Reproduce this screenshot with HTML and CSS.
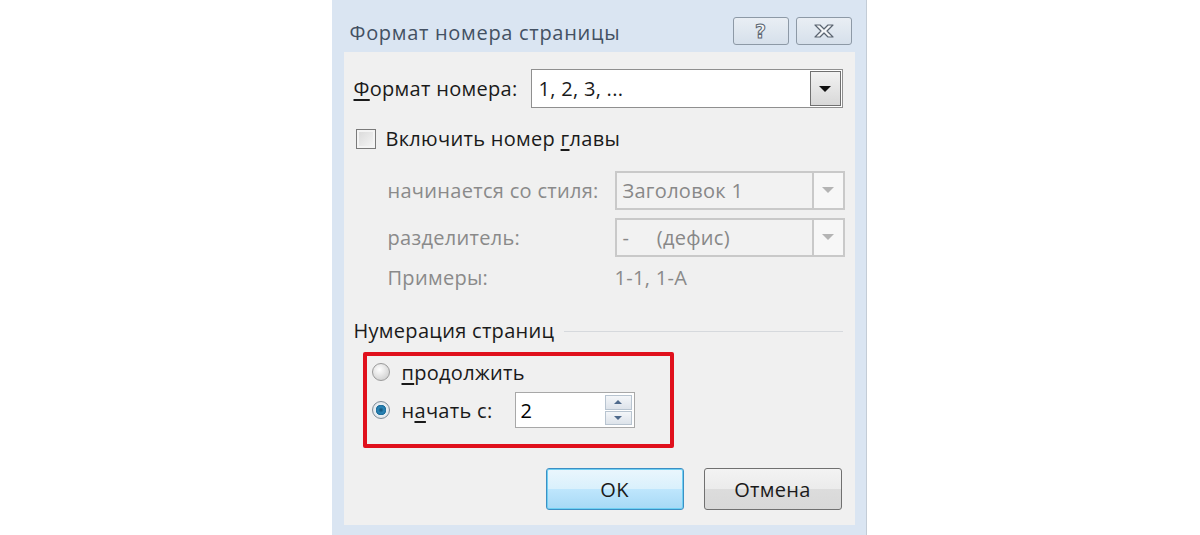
FILE: index.html
```html
<!DOCTYPE html>
<html lang="ru">
<head>
    <meta charset="UTF-8">
    <title>Формат номера страницы</title>
    <link rel="stylesheet" href="styles.css">
</head>
<body>
    <div class="dialog">
        <div class="titlebar">
            <span class="title">Формат номера страницы</span>
            <div class="title-buttons">
                <div class="tb-button"><span class="help-glyph">?</span></div>
                <div class="tb-button">
                    <svg width="26" height="16" viewBox="0 0 26 16">
                        <path d="M4 2 H9 L13 6 L17 2 H22 L16 8 L22 14 H17 L13 10 L9 14 H4 L10 8 Z" fill="#f4f6f8" stroke="#5a6470" stroke-width="1.2" stroke-linejoin="round"/>
                    </svg>
                </div>
            </div>
        </div>

        <div class="panel">
            <div class="row format-row">
                <label class="label-main"><u>Ф</u>ормат номера:</label>
                <div class="select select-wide">
                    <span class="select-text">1, 2, 3, ...</span>
                    <span class="select-arrow"><span class="arrow"></span></span>
                </div>
            </div>

            <div class="row check-row">
                <span class="checkbox"></span>
                <span class="label-main">Включить номер <u>г</u>лавы</span>
            </div>

            <div class="sub-grid">
                <span class="label-off">начинается со стиля:</span>
                <div class="select select-off">
                    <span class="select-text">Заголовок 1</span>
                    <span class="select-arrow"><span class="arrow"></span></span>
                </div>
                <span class="label-off">разделитель:</span>
                <div class="select select-off">
                    <span class="select-text">-&nbsp;&nbsp;&nbsp;&nbsp;&nbsp;(дефис)</span>
                    <span class="select-arrow"><span class="arrow"></span></span>
                </div>
                <span class="label-off">Примеры:</span>
                <span class="label-off">1-1, 1-A</span>
            </div>

            <div class="group-title">
                <span>Нумерация страниц</span>
                <span class="group-line"></span>
            </div>

            <div class="highlight">
                <div class="radio-row">
                    <span class="radio"></span>
                    <span class="label-main"><u>п</u>родолжить</span>
                </div>
                <div class="radio-row">
                    <span class="radio radio-on"></span>
                    <span class="label-main start-label">н<u>а</u>чать с:</span>
                    <div class="spin">
                        <span class="spin-text">2</span>
                        <span class="spin-buttons">
                            <span class="spin-btn"><span class="arrow-up"></span></span>
                            <span class="spin-btn"><span class="arrow-down"></span></span>
                        </span>
                    </div>
                </div>
            </div>

            <div class="buttons">
                <button class="btn btn-default">OK</button>
                <button class="btn">Отмена</button>
            </div>
        </div>
    </div>
</body>
</html>
```

FILE: styles.css
```css
body {
    margin: 0;
    background-color: #fff;
    font-family: "Open Sans", "Noto Sans", sans-serif;
    display: flex;
    justify-content: center;
}
.dialog {
    width: 535px;
    height: 535px;
    box-sizing: border-box;
    margin-left: -2px;
    padding: 0 11px 10px 12px;
    background-color: #dae5f2;
    border-right: 1px solid #c3ccd6;
    display: flex;
    flex-direction: column;
}
.titlebar {
    height: 52px;
    display: flex;
    align-items: flex-start;
    justify-content: space-between;
}
.title {
    margin-top: 19px;
    margin-left: 6px;
    font-size: 20px;
    letter-spacing: 0.7px;
    color: #435163;
}
.title-buttons {
    display: flex;
    gap: 7px;
    margin-top: 17px;
    margin-right: 3px;
}
.tb-button {
    width: 54px;
    height: 26px;
    border: 1px solid #8d99a6;
    border-radius: 3px;
    background: linear-gradient(#e9eef4, #d6e0eb);
    display: flex;
    align-items: center;
    justify-content: center;
}
.help-glyph {
    font-family: "DejaVu Sans", sans-serif;
    font-weight: bold;
    font-size: 19px;
    color: #f4f6f8;
    -webkit-text-stroke: 1px #5a6470;
    line-height: 1;
}
.panel {
    flex: 1;
    background-color: #f0f0f0;
    padding: 17px 12px 0 10px;
    display: flex;
    flex-direction: column;
}
.row {
    display: flex;
    align-items: center;
}
.label-main {
    font-size: 20px;
    letter-spacing: 0.3px;
    color: #1a1a1a;
}
u {
    text-underline-offset: 3px;
}
.format-row {
    justify-content: space-between;
}
.select {
    height: 39px;
    box-sizing: border-box;
    border: 1px solid #8f8f8f;
    background-color: #fff;
    display: flex;
    align-items: stretch;
}
.select-wide {
    width: 312px;
}
.select-text {
    flex: 1;
    padding-left: 7px;
    font-size: 20px;
    letter-spacing: 0.3px;
    display: flex;
    align-items: center;
    color: #1a1a1a;
}
.select-arrow {
    width: 29px;
    margin: 1px;
    border: 1px solid #707070;
    background: linear-gradient(#f2f2f2, #d8d8d8);
    display: flex;
    align-items: center;
    justify-content: center;
}
.arrow {
    width: 0;
    height: 0;
    border-left: 6px solid transparent;
    border-right: 6px solid transparent;
    border-top: 6px solid #111;
}
.select-off {
    width: 230px;
    border: 2px solid #c9c9c9;
    background-color: #f2f2f2;
}
.select-off .select-text {
    color: #888;
    padding-left: 6px;
}
.select-off .select-arrow {
    margin: 0;
    border: none;
    border-left: 2px solid #c9c9c9;
    background: #f7f7f7;
}
.select-off .arrow {
    border-top-color: #b4b4b4;
}
.check-row {
    margin-top: 17px;
    gap: 10px;
    padding-left: 2px;
}
.checkbox {
    width: 18px;
    height: 18px;
    border: 1px solid #7a7a7a;
    background: linear-gradient(135deg, #d8d8d8, #f7f7f7);
    box-shadow: inset 0 0 0 2px #f4f4f4;
}
.sub-grid {
    display: grid;
    grid-template-columns: 227px 230px;
    grid-template-rows: 40px 40px 26px;
    row-gap: 7px;
    margin-top: 18px;
    padding-left: 34px;
    align-items: center;
}
.label-off {
    font-size: 20px;
    letter-spacing: 0.3px;
    color: #8a8a8a;
}
.group-title {
    display: flex;
    align-items: center;
    gap: 10px;
    margin-top: 27px;
    font-size: 20px;
    letter-spacing: 0.3px;
    color: #1a1a1a;
}
.group-line {
    flex: 1;
    height: 1px;
    background-color: #d6d9dd;
    margin-top: 2px;
}
.highlight {
    width: 311px;
    height: 96px;
    box-sizing: border-box;
    margin-top: 8px;
    margin-left: 9px;
    border: 4px solid #e0101c;
    border-radius: 2px;
    padding: 2px 0 0 5px;
    display: flex;
    flex-direction: column;
    gap: 6px;
}
.radio-row {
    display: flex;
    align-items: center;
    gap: 12px;
}
.radio-row:first-child {
    height: 28px;
}
.radio {
    width: 18px;
    height: 18px;
    box-sizing: border-box;
    border-radius: 50%;
    border: 1px solid #9a9a9a;
    background: radial-gradient(circle at 40% 35%, #ffffff, #d6d6d6 70%);
}
.radio-on {
    background: radial-gradient(circle at 50% 50%, #0d4d73 0, #2a86b8 3px, #1a6c9a 5px, #e8eef2 5.5px, #d7dde2 100%);
    border-color: #7d8c98;
}
.start-label {
    width: 101px;
}
.spin {
    width: 120px;
    height: 36px;
    box-sizing: border-box;
    border: 1px solid #a8a8a8;
    background-color: #fff;
    display: flex;
}
.spin-text {
    flex: 1;
    padding-left: 5px;
    font-size: 20px;
    display: flex;
    align-items: center;
}
.spin-buttons {
    width: 27px;
    margin: 2px;
    display: flex;
    flex-direction: column;
    gap: 1px;
}
.spin-btn {
    flex: 1;
    border: 1px solid #b8c4d0;
    background: linear-gradient(#f4f6f9, #dde3ea);
    display: flex;
    align-items: center;
    justify-content: center;
}
.arrow-up {
    width: 0;
    height: 0;
    border-left: 4px solid transparent;
    border-right: 4px solid transparent;
    border-bottom: 4px solid #4f6a8c;
}
.arrow-down {
    width: 0;
    height: 0;
    border-left: 4px solid transparent;
    border-right: 4px solid transparent;
    border-top: 4px solid #4f6a8c;
}
.buttons {
    display: flex;
    justify-content: flex-end;
    gap: 20px;
    margin-top: 20px;
    padding-right: 1px;
}
.btn {
    width: 138px;
    height: 42px;
    border: 1px solid #707070;
    border-radius: 3px;
    background: linear-gradient(#f3f3f3 0%, #ebebeb 50%, #dcdcdc 51%, #d8d8d8 100%);
    font-family: "Open Sans", "Noto Sans", sans-serif;
    font-size: 20px;
    letter-spacing: 0.3px;
    color: #1a1a1a;
}
.btn-default {
    border-color: #3c8fc4;
    box-shadow: inset 0 0 0 1px #6fd0f3;
    background: linear-gradient(#eaf6fd 0%, #d9f0fc 50%, #bee6fd 51%, #a7d9f5 100%);
}
```
